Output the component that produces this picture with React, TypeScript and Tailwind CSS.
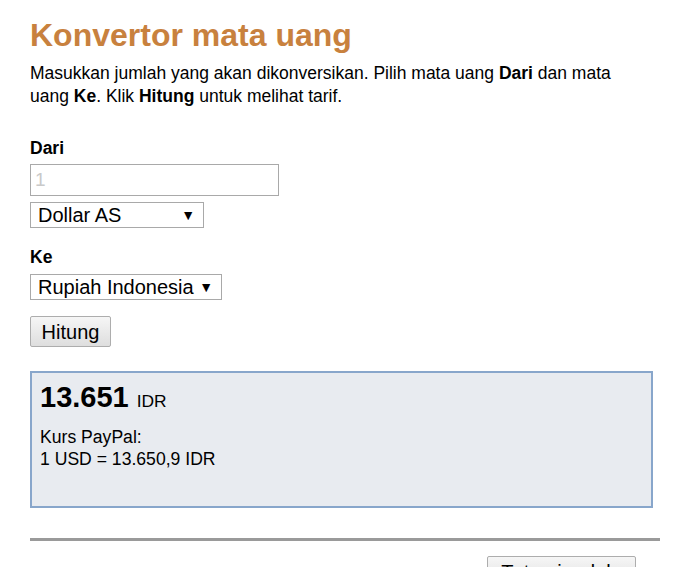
import React from "react";

export default function App() {
  return (
    <div className="w-[676px] h-[567px] overflow-hidden bg-white text-black" style={{ fontFamily: '"Liberation Sans", Arial, sans-serif' }}>
      <div className="pl-[30px] pr-[16px] pt-[15px]">
        <h1 className="text-[32px] leading-[40px] font-bold text-[#c8813e]">Konvertor mata uang</h1>
        <p className="mt-[7px] text-[17.5px] leading-[23px] w-[602px]">
          Masukkan jumlah yang akan dikonversikan. Pilih mata uang <b>Dari</b> dan mata uang <b>Ke</b>. Klik <b>Hitung</b> untuk melihat tarif.
        </p>

        <div className="mt-[30px] text-[17.5px] font-bold leading-[20px]">Dari</div>
        <div className="mt-[6px] w-[249px] h-[32px] border border-[#a9a9a9] flex items-center px-[4px] text-[19px] text-[#c9c9c9]">1</div>
        <div className="mt-[6px] w-[174px] h-[26px] border border-[#a9a9a9] flex items-center justify-between pl-[7px] pr-[8px] text-[20px]">
          <span>Dollar AS</span>
          <span className="text-[14px] leading-none">▼</span>
        </div>

        <div className="mt-[19px] text-[17.5px] font-bold leading-[20px]">Ke</div>
        <div className="mt-[7px] w-[192px] h-[26px] border border-[#a9a9a9] flex items-center justify-between pl-[7px] pr-[8px] text-[20px]">
          <span>Rupiah Indonesia</span>
          <span className="text-[14px] leading-none">▼</span>
        </div>

        <div className="mt-[16px] w-[81px] h-[31px] border border-[#adadad] rounded-[2px] bg-gradient-to-b from-[#f6f6f6] to-[#dedede] flex items-center justify-center text-[20px]">Hitung</div>

        <div className="mt-[24px] w-[623px] h-[137px] border-2 border-[#88a6cb] bg-[#e8ebf0] px-[8px] pt-[6px]">
          <div className="flex items-baseline">
            <span className="text-[29px] font-bold leading-[36px]">13.651</span>
            <span className="ml-[8px] text-[17.4px]">IDR</span>
          </div>
          <div className="mt-[11px] text-[17.6px] leading-[22px]">
            <div>Kurs PayPal:</div>
            <div>1 USD = 13.650,9 IDR</div>
          </div>
        </div>

        <div className="mt-[30px] w-[630px] h-[3px] bg-[#9a9a9a]"></div>

        <div className="flex justify-end w-[606px] mt-[15px]">
          <div className="w-[149px] h-[31px] border border-[#adadad] rounded-[2px] bg-gradient-to-b from-[#f6f6f6] to-[#dedede] flex items-center justify-center text-[20px]">Tutup jendela</div>
        </div>
      </div>
    </div>
  );
}
